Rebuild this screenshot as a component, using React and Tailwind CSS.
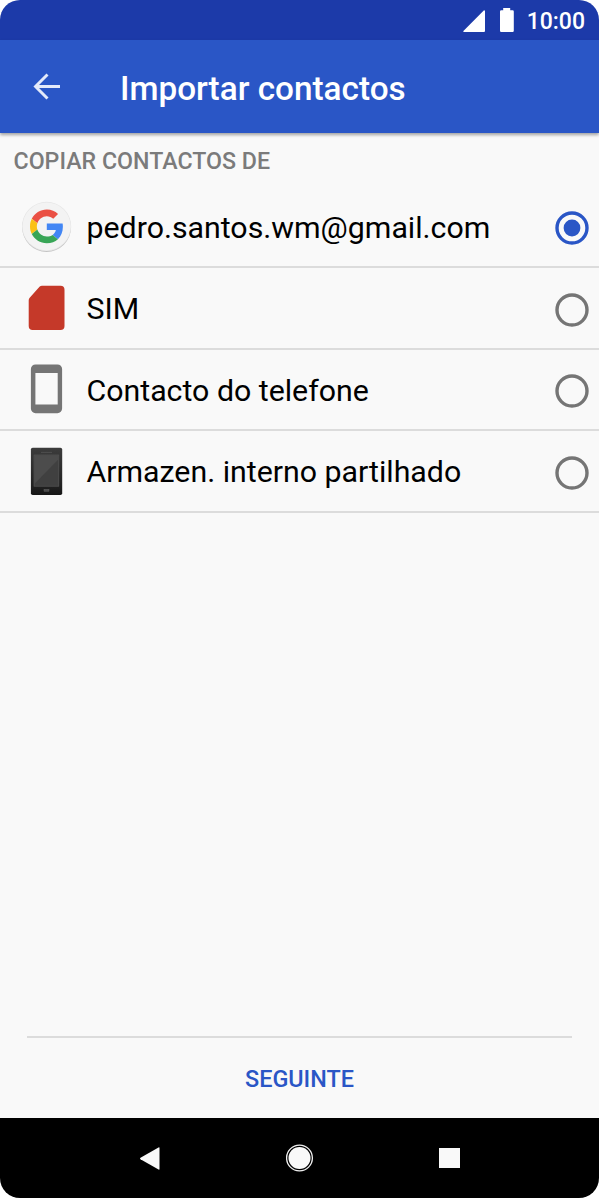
import { useState } from "react";

const accounts = [
  { id: "google", label: "pedro.santos.wm@gmail.com", Icon: GoogleIcon },
  { id: "sim", label: "SIM", Icon: SimIcon },
  { id: "phone", label: "Contacto do telefone", Icon: PhoneIcon },
  { id: "storage", label: "Armazen. interno partilhado", Icon: StorageIcon },
];

function GoogleIcon() {
  return (
    <svg className="w-[52px] h-[52px]" viewBox="0 0 52 52">
      <circle cx="26.6" cy="27.5" r="24.4" fill="#c4c4c4" />
      <circle cx="26.6" cy="26.4" r="24.6" fill="#e6e6e6" />
      <circle cx="26.6" cy="26.4" r="24" fill="#f3f3f3" />
      <g transform="translate(10 9.6) scale(0.7)">
        <path fill="#ea5044" d="M24 9.5c3.54 0 6.71 1.22 9.21 3.6l6.85-6.85C35.9 2.38 30.47 0 24 0 14.62 0 6.51 5.38 2.56 13.22l7.98 6.19C12.43 13.72 17.74 9.5 24 9.5z" />
        <path fill="#4286f4" d="M46.98 24.55c0-1.57-.15-3.09-.38-4.55H24v9.02h12.94c-.58 2.96-2.26 5.48-4.78 7.18l7.73 6c4.51-4.18 7.09-10.36 7.09-17.65z" />
        <path fill="#fbc116" d="M10.53 28.59c-.48-1.45-.76-2.99-.76-4.59s.27-3.14.76-4.59l-7.98-6.19C.92 16.46 0 20.12 0 24c0 3.88.92 7.54 2.56 10.78l7.97-6.19z" />
        <path fill="#38a556" d="M24 48c6.48 0 11.93-2.13 15.89-5.81l-7.73-6c-2.15 1.45-4.92 2.3-8.16 2.3-6.26 0-11.57-4.22-13.47-9.91l-7.98 6.19C6.51 42.62 14.62 48 24 48z" />
      </g>
    </svg>
  );
}

function SimIcon() {
  return (
    <svg className="w-[52px] h-[52px]" viewBox="0 0 52 52">
      <path
        fill="#c53929"
        d="M22 3.700h18.500a4 4 0 0 1 4 4v36.200a4 4 0 0 1-4 4H12.700a4 4 0 0 1-4-4V18.300a3.500 3.500 0 0 1 1-2.500L19.500 4.700a3.500 3.500 0 0 1 2.500-1z"
      />
    </svg>
  );
}

function PhoneIcon() {
  return (
    <svg className="w-[52px] h-[52px]" viewBox="0 0 52 52">
      <path
        fill="#757575"
        fillRule="evenodd"
        d="M15.5 1.5h22a4.6 4.6 0 0 1 4.6 4.6v39.5a4.6 4.6 0 0 1-4.6 4.6h-22a4.6 4.6 0 0 1-4.6-4.6V6.1a4.6 4.6 0 0 1 4.6-4.6zM15.4 10v31.5h22.3V10z"
      />
    </svg>
  );
}

function StorageIcon() {
  return (
    <svg className="w-[52px] h-[52px]" viewBox="0 0 52 52">
      <defs>
        <linearGradient id="storageBody" x1="0" y1="0" x2="0" y2="1">
          <stop offset="0" stopColor="#3c3c3c" />
          <stop offset="0.8" stopColor="#222" />
          <stop offset="1" stopColor="#161616" />
        </linearGradient>
      </defs>
      <g transform="translate(0 0.5)">
        <rect x="10.9" y="2.2" width="31.3" height="47.3" rx="1.8" fill="url(#storageBody)" />
        <rect x="21" y="6.4" width="11" height="0.8" fill="#555" />
        <rect x="14" y="9.5" width="24.8" height="31.2" fill="#404040" stroke="#5a5a5a" strokeWidth="0.6" />
        <path d="M14.3 9.8h24.2v4L14.3 38.5z" fill="#4c4c4c" />
        <rect x="24" y="43.8" width="5" height="2" fill="#4a4a4a" stroke="#666" strokeWidth="0.4" />
      </g>
    </svg>
  );
}

function Radio({ checked }) {
  return (
    <svg className="w-[34px] h-[34px] mt-[4px]" viewBox="0 0 34 34">
      <circle cx="17" cy="17" r="15" fill="none" stroke={checked ? "#2a56c6" : "#757575"} strokeWidth="3.4" />
      {checked && <circle cx="17" cy="17" r="8.4" fill="#2a56c6" />}
    </svg>
  );
}

function StatusBar() {
  return (
    <div className="h-10 shrink-0 bg-[#1c3aa9] flex items-center justify-end pr-[14px] text-white">
      <svg className="w-[22px] h-[22px] mt-px" viewBox="0 0 22 22" fill="#fff">
        <path d="M21 0.3a1 1 0 0 1 1 1V21a1 1 0 0 1-1 1H0.8a0.6 0.6 0 0 1-.4-1z" />
      </svg>
      <svg className="w-[14px] h-6 ml-[15px]" viewBox="0 0 14 24" fill="#fff">
        <path d="M3.2 0h7v2.2H12.6a1.2 1.2 0 0 1 1.2 1.2v19.4a1.2 1.2 0 0 1-1.2 1.2H1.2A1.2 1.2 0 0 1 0 22.8V3.4a1.2 1.2 0 0 1 1.2-1.2h2z" />
      </svg>
      <span className="ml-[13px] pt-[2px] text-[23px] leading-none font-medium">10:00</span>
    </div>
  );
}

function NavBar() {
  return (
    <nav className="h-20 shrink-0 bg-black flex items-center justify-between px-[139px]">
      <svg className="w-[21px] h-[23px]" viewBox="0 0 21 23" fill="#f9f9f9">
        <path d="M19.5 0.5Q20.5 0 20.5 1V22Q20.5 23 19.5 22.5L1.5 12.3Q0.3 11.5 1.5 10.7z" />
      </svg>
      <svg className="w-7 h-7" viewBox="0 0 28 28">
        <circle cx="13.5" cy="14" r="12.9" fill="none" stroke="#f0f0f0" strokeWidth="1.3" />
        <circle cx="13.5" cy="14" r="11" fill="#f9f9f9" />
      </svg>
      <div className="w-[21px] h-5 bg-[#f9f9f9]" />
    </nav>
  );
}

export default function App() {
  const [selected, setSelected] = useState("google");

  return (
    <div className="w-full h-[1198px] bg-white font-['Roboto',sans-serif]">
      <div className="h-full flex flex-col bg-[#f9f9f9] rounded-[20px] overflow-hidden">
        <StatusBar />

        <header className="h-[93px] shrink-0 bg-[#2a56c6] flex items-center pl-[33px] shadow-[0_2px_3px_rgba(0,0,0,0.35)]">
          <button type="button" aria-label="Voltar" className="mr-[59px]">
            <svg className="w-[28px] h-[27px]" viewBox="0 0 28 27" fill="none" stroke="#e4eafa" strokeWidth="2.9">
              <path d="M27 13.5H3M14.5 1.5L2.5 13.5l12 12" />
            </svg>
          </button>
          <h1 className="pt-1 text-[33.3px] leading-none font-medium text-white">Importar contactos</h1>
        </header>

        <main className="flex-1 flex flex-col">
          <h2 className="h-[53.4px] pt-[15px] pl-[13.5px] text-[23.2px] leading-[27px] font-medium text-[#7b7b7b]">
            COPIAR CONTACTOS DE
          </h2>

          <ul>
            {accounts.map(({ id, label, Icon }) => (
              <li key={id} className="h-[81.6px] border-b-2 border-[#dcdcdc]">
                <button
                  type="button"
                  onClick={() => setSelected(id)}
                  className="w-full h-full flex items-center pl-5 pr-[10px] text-left"
                >
                  <Icon />
                  <span className="ml-[14.5px] pt-[3px] flex-1 text-[30.3px] leading-none text-black">{label}</span>
                  <Radio checked={selected === id} />
                </button>
              </li>
            ))}
          </ul>

          <footer className="mt-auto mx-[27px] h-[82px] pt-[4px] border-t-2 border-[#dcdcdc] flex items-center justify-center">
            <button type="button" className="text-[23.4px] leading-none font-medium text-[#2a56c6]">
              SEGUINTE
            </button>
          </footer>
        </main>

        <NavBar />
      </div>
    </div>
  );
}
